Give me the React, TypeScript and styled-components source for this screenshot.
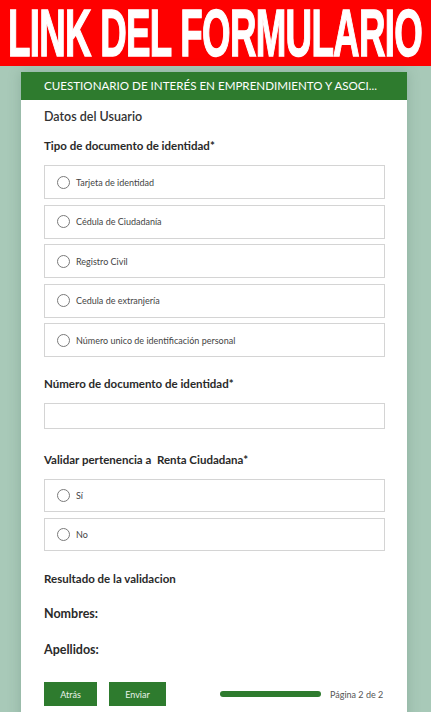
import styled, { createGlobalStyle } from 'styled-components';

const GlobalStyle = createGlobalStyle`
  body {
    margin: 0;
    background: #a8c9b8;
    font-family: 'Lato', 'Open Sans', sans-serif;
    overflow: hidden;
  }
`;

const tipoOptions = [
  'Tarjeta de identidad',
  'Cédula de Ciudadanía',
  'Registro Civil',
  'Cedula de extranjería',
  'Número unico de identificación personal',
];

const Radio = ({ label, height = 34 }: { label: string; height?: number }) => (
  <OptionBox h={height}>
    <Circle />
    <OptionText>{label}</OptionText>
  </OptionBox>
);

const App = () => {
  return (
    <>
      <GlobalStyle />
      <Banner>
        <BannerTitle>LINK DEL FORMULARIO</BannerTitle>
      </Banner>
      <Card>
        <CardHeader>CUESTIONARIO DE INTERÉS EN EMPRENDIMIENTO Y ASOCI...</CardHeader>
        <CardBody>
          <SectionTitle>Datos del Usuario</SectionTitle>
          <Label top={13}>Tipo de documento de identidad*</Label>
          <OptionList>
            {tipoOptions.map((o) => (
              <Radio key={o} label={o} />
            ))}
          </OptionList>
          <Label top={19}>Número de documento de identidad*</Label>
          <Input />
          <Label top={23}>Validar pertenencia a &nbsp;Renta Ciudadana*</Label>
          <OptionList gap={6}>
            <Radio label="Sí" height={33} />
            <Radio label="No" height={33} />
          </OptionList>
          <Label top={20}>Resultado de la validacion</Label>
          <Label top={19} big>Nombres:</Label>
          <Label top={20} big>Apellidos:</Label>
          <Footer>
            <Button w={53}>Atrás</Button>
            <Button w={57}>Enviar</Button>
            <Progress>
              <Bar />
              <PageText>Página 2 de 2</PageText>
            </Progress>
          </Footer>
        </CardBody>
      </Card>
    </>
  );
};

const Banner = styled.div`
  height: 66px;
  background: #fe0000;
  display: flex;
  align-items: center;
  justify-content: center;
  overflow: hidden;
`;

// Condensed display type: a bold sans stretched vertically
const BannerTitle = styled.div`
  font-family: 'Liberation Sans', Arial, sans-serif;
  font-weight: 700;
  font-size: 36px;
  line-height: 30px;
  color: #fff;
  white-space: nowrap;
  letter-spacing: -0.7px;
  -webkit-text-stroke: 0.8px #fff;
  transform: scale(1.02, 1.85);
  transform-origin: center;
  margin-top: 1px;
`;

const Card = styled.div`
  margin: 6px 0 0 21px;
  width: 386px;
  background: #fff;
  min-height: 700px;
  box-shadow: 0 0 12px rgba(60, 100, 80, 0.25);
`;

const CardHeader = styled.div`
  height: 28px;
  background: #2e7b2e;
  color: #fff;
  font-size: 11.6px;
  line-height: 28px;
  padding-left: 23px;
  white-space: nowrap;
  overflow: hidden;
`;

const CardBody = styled.div`
  padding: 9px 22px 0 23px;
  display: flex;
  flex-direction: column;
`;

const SectionTitle = styled.div`
  font-size: 12.5px;
  line-height: 16px;
  font-weight: 600;
  color: #333;
`;

const Label = styled.div<{ top: number; big?: boolean }>`
  margin-top: ${({ top }) => top}px;
  font-size: ${({ big }) => (big ? 12.5 : 11.5)}px;
  line-height: 16px;
  font-weight: 700;
  color: #2a2a2a;
`;

const OptionList = styled.div<{ gap?: number }>`
  margin-top: 11px;
  display: flex;
  flex-direction: column;
  gap: ${({ gap }) => gap ?? 5.5}px;
`;

const OptionBox = styled.div<{ h: number }>`
  height: ${({ h }) => h}px;
  box-sizing: border-box;
  border: 1px solid #d4d4d4;
  display: flex;
  align-items: center;
  padding-left: 12px;
  gap: 6px;
`;

const Circle = styled.span`
  width: 13px;
  height: 13px;
  box-sizing: border-box;
  border: 1.5px solid #7a7a7a;
  border-radius: 50%;
`;

const OptionText = styled.span`
  font-size: 9px;
  color: #444;
`;

const Input = styled.div`
  margin-top: 11px;
  height: 26px;
  box-sizing: border-box;
  border: 1px solid #d4d4d4;
`;

const Footer = styled.div`
  margin-top: 24px;
  display: flex;
  align-items: center;
  gap: 12px;
`;

const Button = styled.div<{ w: number }>`
  width: ${({ w }) => w}px;
  height: 24px;
  background: #2e7b2e;
  color: #e8f2e8;
  font-size: 9px;
  display: flex;
  align-items: center;
  justify-content: center;
`;

const Progress = styled.div`
  margin-left: 42px;
  display: flex;
  align-items: center;
  gap: 9px;
`;

const Bar = styled.div`
  width: 101px;
  height: 6px;
  border-radius: 3px;
  background: #2e7b2e;
`;

const PageText = styled.span`
  font-size: 9px;
  color: #555;
`;

export default App;
